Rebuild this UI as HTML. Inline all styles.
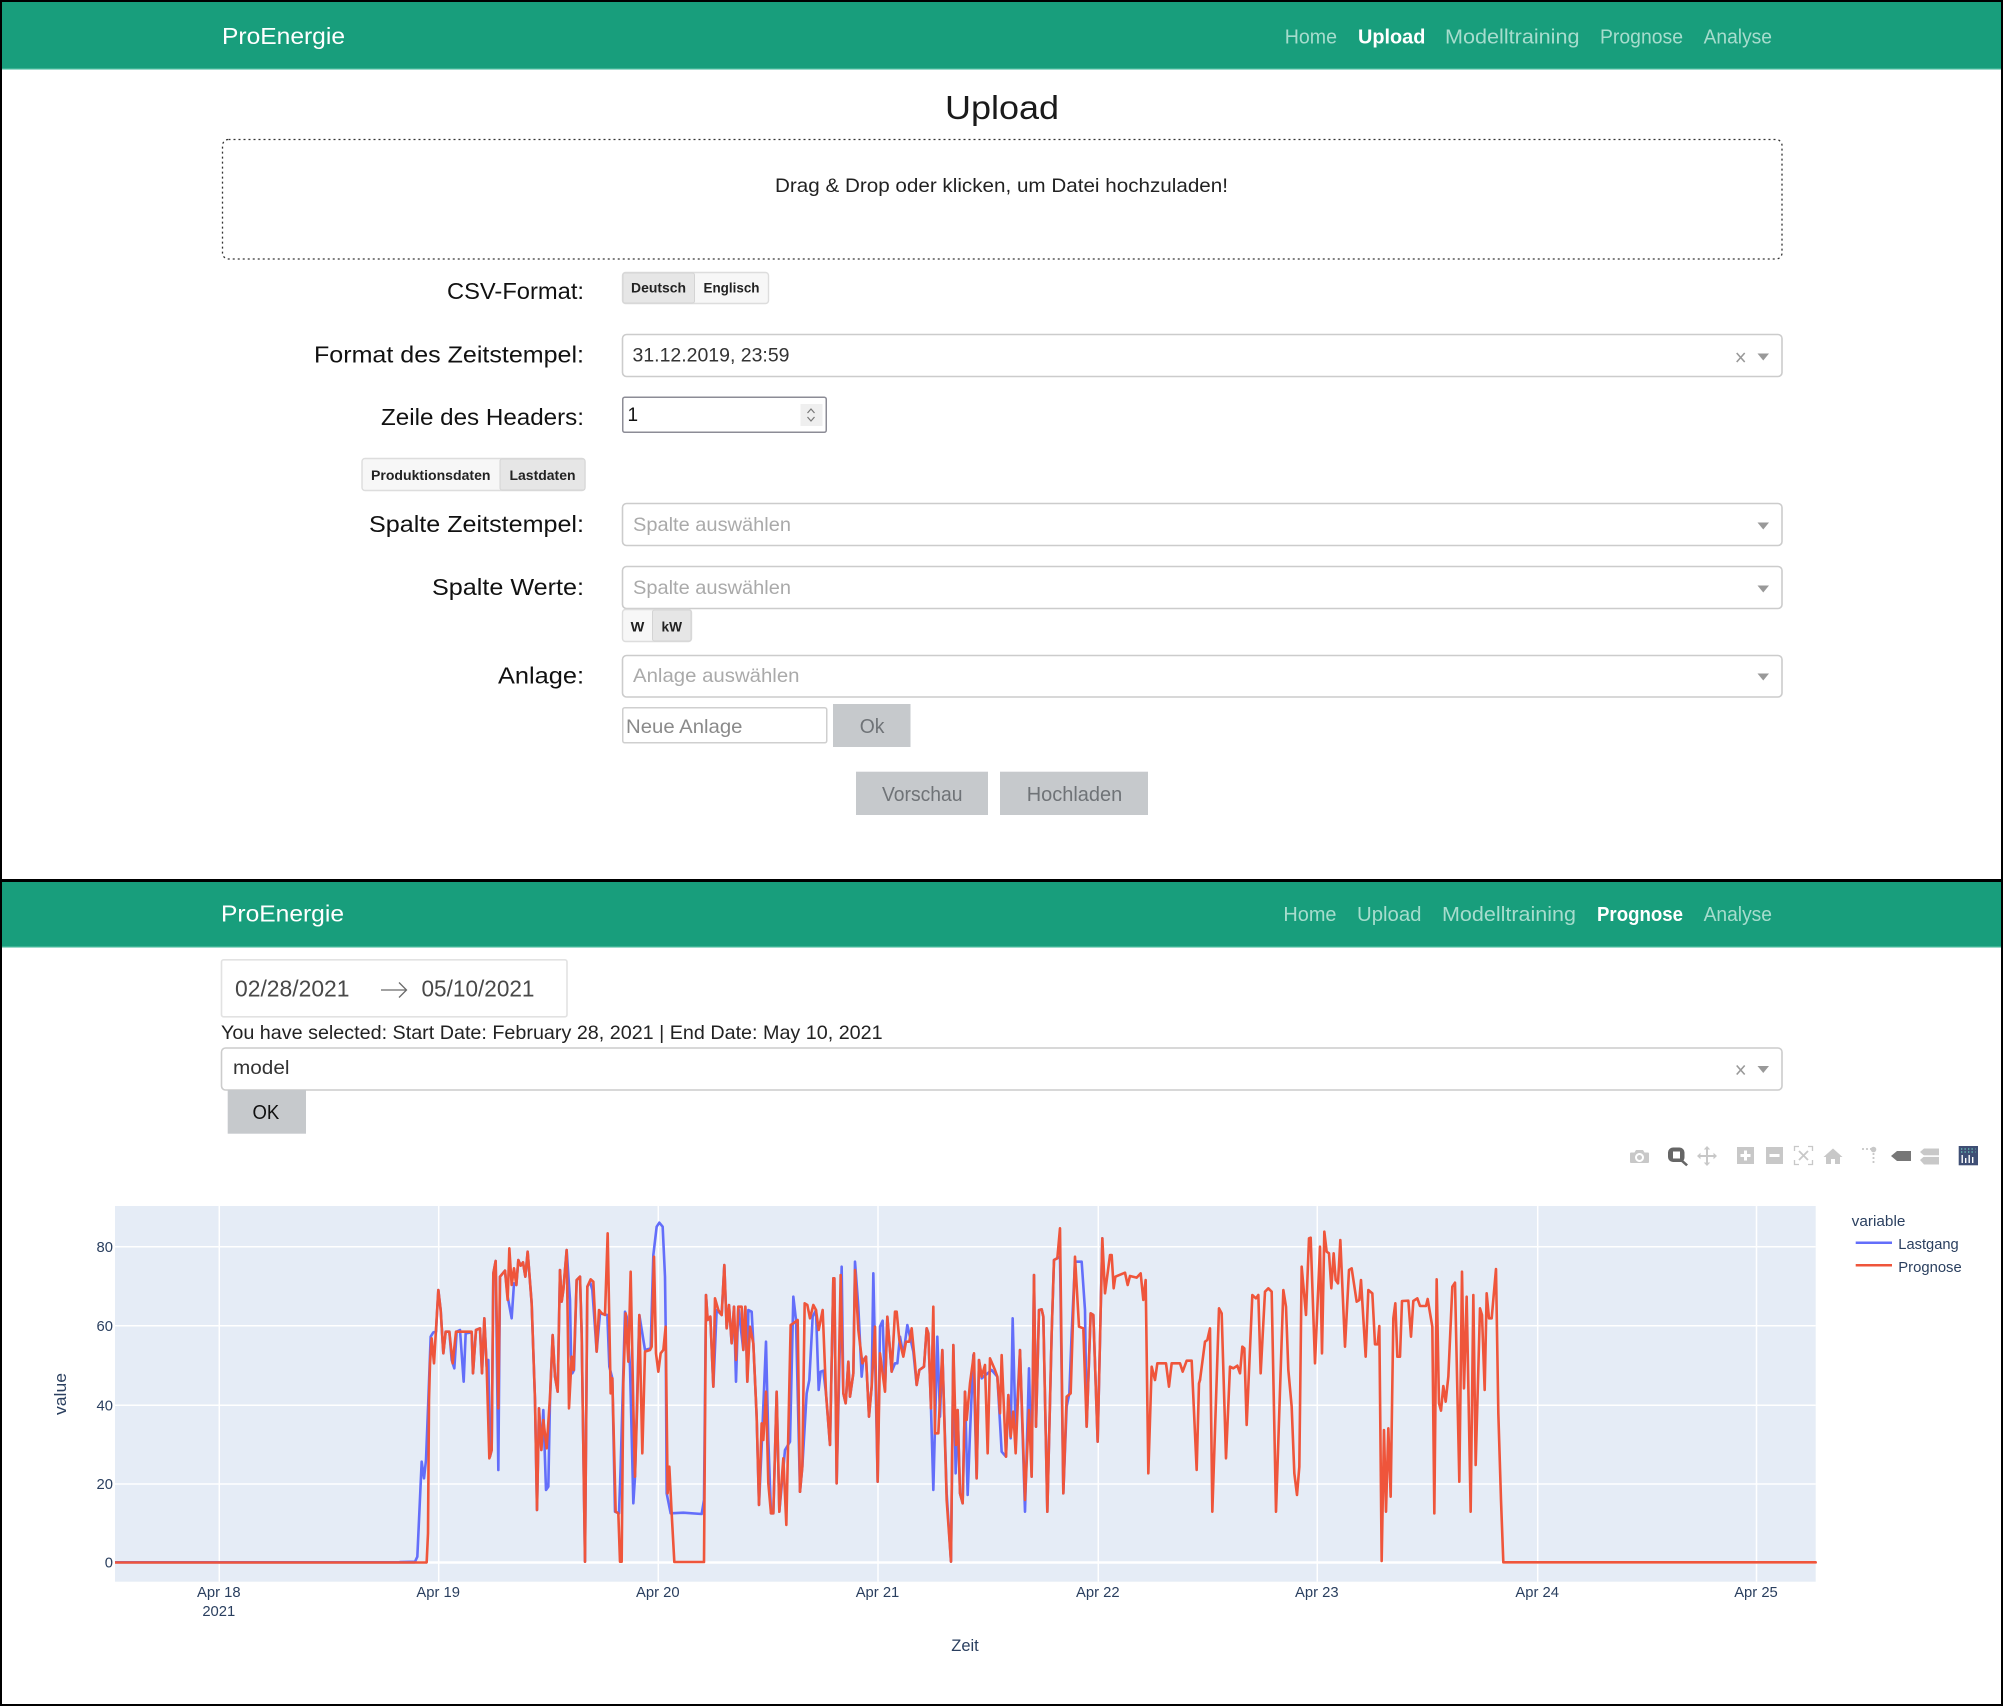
<!DOCTYPE html>
<html lang="de"><head><meta charset="utf-8"><title>ProEnergie</title>
<style>
html,body{margin:0;padding:0;background:#fff;width:2003px;height:1706px;overflow:hidden}
svg{display:block;filter:blur(.35px)}
text{font-family:"Liberation Sans",Arial,sans-serif}
.nav{font-size:20px;fill:#a6dccd}
.act{font-size:20px;fill:#fff;font-weight:bold}
.lab{font-size:23.5px;fill:#111}
.val{font-size:19.5px;fill:#333}
.ph{font-size:19.5px;fill:#aaa}
.seg{font-size:13.5px;fill:#222;font-weight:bold}
.btn{font-size:20px;fill:#6f7377}
.tk{font-size:14.8px;fill:#2a3f5f}
.sel{fill:#fff;stroke:#ccc;stroke-width:1.6}
.g{stroke:#fff;stroke-width:1.5;fill:none}
.red{fill:none;stroke:#ef553b;stroke-width:7.8;stroke-linejoin:round;stroke-linecap:round}
.blue{fill:none;stroke:#636efa;stroke-width:7.8;stroke-linejoin:round;stroke-linecap:round}
.ic{fill:#c8c8c8}
</style></head><body>
<svg xmlns="http://www.w3.org/2000/svg" width="2003" height="1706" viewBox="0 0 2003 1706">
<rect width="2003" height="1706" fill="#fff"/>

<!-- Upload panel nav -->
<rect x="0" y="0" width="2003" height="69" fill="#189e7c"/>
<rect x="0" y="68" width="2003" height="1.5" fill="#3bb394"/>
<text x="222" y="44" font-size="23" fill="#fff" textLength="123" lengthAdjust="spacingAndGlyphs">ProEnergie</text>
<text class="nav" x="1284.700" y="43.5" textLength="52.300" lengthAdjust="spacingAndGlyphs">Home</text>
<text class="act" x="1358" y="43.5" textLength="67.400" lengthAdjust="spacingAndGlyphs">Upload</text>
<text class="nav" x="1445" y="43.5" textLength="134.500" lengthAdjust="spacingAndGlyphs">Modelltraining</text>
<text class="nav" x="1600" y="43.5" textLength="83" lengthAdjust="spacingAndGlyphs">Prognose</text>
<text class="nav" x="1703.600" y="43.5" textLength="68.400" lengthAdjust="spacingAndGlyphs">Analyse</text>

<text x="945" y="119" font-size="33" fill="#1a1a1a" textLength="114" lengthAdjust="spacingAndGlyphs">Upload</text>

<rect x="222.5" y="139.5" width="1559.500" height="119.5" rx="6" fill="none" stroke="#333" stroke-width="1.3" stroke-dasharray="2 3"/>
<text x="775" y="192" font-size="19.5" fill="#222" textLength="453" lengthAdjust="spacingAndGlyphs">Drag &amp; Drop oder klicken, um Datei hochzuladen!</text>

<!-- CSV -->
<text class="lab" x="447" y="299" textLength="137" lengthAdjust="spacingAndGlyphs">CSV-Format:</text>
<rect x="622.5" y="272.5" width="146" height="31" rx="3" fill="#f7f7f7" stroke="#ddd" stroke-width="1.4"/>
<rect x="623" y="273" width="71.5" height="30" rx="2" fill="#e6e6e6" stroke="#d4d4d4"/>
<text class="seg" x="631" y="292.500" textLength="55" lengthAdjust="spacingAndGlyphs">Deutsch</text>
<text class="seg" x="703.5" y="292.500" textLength="56" lengthAdjust="spacingAndGlyphs">Englisch</text>

<!-- Format -->
<text class="lab" x="314" y="362.500" textLength="270" lengthAdjust="spacingAndGlyphs">Format des Zeitstempel:</text>
<rect class="sel" x="622.5" y="334.5" width="1159.500" height="42" rx="4"/>
<text class="val" x="632.5" y="361.500" textLength="157" lengthAdjust="spacingAndGlyphs">31.12.2019, 23:59</text>
<path d="M1736.700 353l8 9M1744.700 353l-8 9" stroke="#999" stroke-width="1.6" fill="none"/>
<path d="M1757.500 353.500h11.500l-5.750 7z" fill="#999"/>

<!-- Header line -->
<text class="lab" x="381" y="425" textLength="203" lengthAdjust="spacingAndGlyphs">Zeile des Headers:</text>
<rect x="622.75" y="397.25" width="203.500" height="35" rx="2" fill="#fff" stroke="#8c8c96" stroke-width="1.5"/>
<text x="627.500" y="421" font-size="19" fill="#111">1</text>
<rect x="800.500" y="404" width="22" height="22" fill="#efefef"/>
<path d="M807.500 413l3.500-4 3.500 4M807.500 417l3.500 4 3.500-4" fill="none" stroke="#777" stroke-width="1.200"/>

<!-- Produktions -->
<rect x="362" y="458.500" width="223" height="32" rx="3" fill="#f7f7f7" stroke="#ddd" stroke-width="1.4"/>
<rect x="500" y="459" width="85" height="31" rx="2" fill="#e6e6e6" stroke="#d4d4d4"/>
<text class="seg" x="371" y="480" textLength="119.500" lengthAdjust="spacingAndGlyphs">Produktionsdaten</text>
<text class="seg" x="509.500" y="480" textLength="66" lengthAdjust="spacingAndGlyphs">Lastdaten</text>

<!-- Spalte Zeitstempel -->
<text class="lab" x="369" y="532" textLength="215" lengthAdjust="spacingAndGlyphs">Spalte Zeitstempel:</text>
<rect class="sel" x="622.500" y="503.500" width="1159.500" height="42" rx="4"/>
<text class="ph" x="633" y="531" textLength="158" lengthAdjust="spacingAndGlyphs">Spalte auswählen</text>
<path d="M1757.500 522.500h11.500l-5.750 7z" fill="#999"/>

<!-- Spalte Werte -->
<text class="lab" x="432" y="595" textLength="152" lengthAdjust="spacingAndGlyphs">Spalte Werte:</text>
<rect class="sel" x="622.500" y="566.500" width="1159.500" height="42" rx="4"/>
<text class="ph" x="633" y="594" textLength="158" lengthAdjust="spacingAndGlyphs">Spalte auswählen</text>
<path d="M1757.500 585.500h11.500l-5.750 7z" fill="#999"/>
<rect x="622.500" y="609.500" width="69" height="32" rx="3" fill="#f7f7f7" stroke="#ddd" stroke-width="1.400"/>
<rect x="652.500" y="610" width="38.500" height="31" rx="2" fill="#e6e6e6" stroke="#d4d4d4"/>
<text class="seg" x="630.700" y="631.500" textLength="13.700" lengthAdjust="spacingAndGlyphs">W</text>
<text class="seg" x="661.500" y="631.500" textLength="20.500" lengthAdjust="spacingAndGlyphs">kW</text>

<!-- Anlage -->
<text class="lab" x="498" y="683.500" textLength="86" lengthAdjust="spacingAndGlyphs">Anlage:</text>
<rect class="sel" x="622.500" y="655.500" width="1159.500" height="41.500" rx="4"/>
<text class="ph" x="633" y="682" textLength="166.500" lengthAdjust="spacingAndGlyphs">Anlage auswählen</text>
<path d="M1757.500 673.500h11.500l-5.750 7z" fill="#999"/>
<rect x="622.750" y="707.750" width="204" height="35" rx="2" fill="#fff" stroke="#cfcfcf" stroke-width="1.500"/>
<text x="626" y="733" font-size="19.500" fill="#8a8a8a" textLength="116.500" lengthAdjust="spacingAndGlyphs">Neue Anlage</text>
<rect x="833" y="704" width="77.500" height="43" fill="#c6c9cc"/>
<text class="btn" x="859.700" y="733" textLength="24.700" lengthAdjust="spacingAndGlyphs">Ok</text>
<rect x="856" y="771.700" width="132" height="43.300" fill="#c6c9cc"/>
<text class="btn" x="882" y="801" textLength="80.500" lengthAdjust="spacingAndGlyphs">Vorschau</text>
<rect x="1000" y="771.700" width="148" height="43.300" fill="#c6c9cc"/>
<text class="btn" x="1026.700" y="801" textLength="95.500" lengthAdjust="spacingAndGlyphs">Hochladen</text>

<!-- Prognose panel nav -->
<rect x="0" y="882" width="2003" height="65" fill="#189e7c"/>
<rect x="0" y="946" width="2003" height="1.500" fill="#3bb394"/>
<text x="221" y="921.500" font-size="23" fill="#fff" textLength="123" lengthAdjust="spacingAndGlyphs">ProEnergie</text>
<text class="nav" x="1283.400" y="921" textLength="53.100" lengthAdjust="spacingAndGlyphs">Home</text>
<text class="nav" x="1357" y="921" textLength="64.500" lengthAdjust="spacingAndGlyphs">Upload</text>
<text class="nav" x="1442" y="921" textLength="134" lengthAdjust="spacingAndGlyphs">Modelltraining</text>
<text class="act" x="1597" y="921" textLength="86" lengthAdjust="spacingAndGlyphs">Prognose</text>
<text class="nav" x="1703.600" y="921" textLength="68.400" lengthAdjust="spacingAndGlyphs">Analyse</text>

<!-- Date range -->
<rect x="221.500" y="959.800" width="345.500" height="57" rx="2" fill="#fff" stroke="#e2e2e2" stroke-width="1.600"/>
<text x="235" y="996.500" font-size="23.500" fill="#484848" textLength="114.500" lengthAdjust="spacingAndGlyphs">02/28/2021</text>
<path d="M381 990h25.500M399 982.500l7.500 7.500-7.500 7.500" fill="none" stroke="#6a6a6a" stroke-width="1.300"/>
<text x="421.500" y="996.500" font-size="23.500" fill="#484848" textLength="113" lengthAdjust="spacingAndGlyphs">05/10/2021</text>
<text x="221" y="1039" font-size="19.500" fill="#222" textLength="661.600" lengthAdjust="spacingAndGlyphs">You have selected: Start Date: February 28, 2021 | End Date: May 10, 2021</text>
<rect class="sel" x="221.500" y="1048" width="1560.500" height="42" rx="4"/>
<text class="val" x="233" y="1074" textLength="56.500" lengthAdjust="spacingAndGlyphs">model</text>
<path d="M1736.700 1065.500l8 9M1744.700 1065.500l-8 9" stroke="#999" stroke-width="1.600" fill="none"/>
<path d="M1757.500 1066h11.500l-5.750 7z" fill="#999"/>
<rect x="227.700" y="1090" width="78.300" height="43.700" fill="#c6c9cc"/>
<text x="252.500" y="1119" font-size="20" fill="#111" textLength="26.800" lengthAdjust="spacingAndGlyphs">OK</text>

<!-- Modebar -->
<path class="ic" fill-rule="evenodd" d="M1631 1152.500h3.500l1.500-2.500h7l1.500 2.500h3.500a1 1 0 0 1 1 1v8.500a1 1 0 0 1-1 1h-17a1 1 0 0 1-1-1v-8.500a1 1 0 0 1 1-1zM1639.500 1153a4.500 4.500 0 1 0 .01 0zM1639.500 1155a2.500 2.500 0 1 1-.01 0z"/>
<path fill="#666" fill-rule="evenodd" d="M1673 1147.500h6.500a5 5 0 0 1 5 5v5a5 5 0 0 1-1 3l4.500 4-1.800 1.800-4.800-4.300h-8.400a5 5 0 0 1-5-5v-4.500a5 5 0 0 1 5-5zM1673 1151.500v7h7v-7z"/>
<path class="ic" d="M1707 1146l3.200 3.500h-2.200v5.500h5.500v-2.200l3.500 3.200-3.500 3.200v-2.200h-5.500v5.500h2.200l-3.200 3.500-3.200-3.500h2.200v-5.500h-5.500v2.200l-3.500-3.200 3.500-3.200v2.200h5.500v-5.500h-2.200z"/>
<path class="ic" fill-rule="evenodd" d="M1737 1147h17v17h-17zM1744 1150.500v3.500h-3.500v3h3.500v3.500h3v-3.500h3.500v-3h-3.500v-3.500z"/>
<path class="ic" fill-rule="evenodd" d="M1766 1147h17v17h-17zM1769.500 1154v3h10v-3z"/>
<path fill="none" stroke="#c8c8c8" stroke-width="1.300" d="M1794.500 1151v-4.500h4.500M1808 1146.500h4.500v4.500M1812.500 1160v4.500h-4.500M1799 1164.500h-4.500v-4.500"/>
<path fill="none" stroke="#c8c8c8" stroke-width="1.800" d="M1799 1151l9 9M1808 1151l-9 9"/>
<path class="ic" d="M1833 1148.500l9.500 8.500h-2.500v7h-5v-5h-4v5h-5v-7h-2.500z"/>
<path fill="none" stroke="#c8c8c8" stroke-width="1.800" stroke-dasharray="2 2" d="M1862 1149h10M1873.500 1153v12"/>
<circle cx="1873.500" cy="1149.500" r="2.800" fill="#c8c8c8"/>
<path fill="#777" d="M1891 1156l6-5h14v10h-14z"/>
<path class="ic" d="M1920 1152l4-3.500h15v7h-15zM1920 1160l4-3.500h15v8h-15z"/>
<rect x="1920" y="1155.300" width="19" height="1.600" fill="#fff"/>
<rect x="1958.700" y="1146" width="19.300" height="19.300" fill="#3f4f75"/>
<path fill="#fff" d="M1961.500 1155h1.400v8h-1.400zM1965 1158h1.400v5H1965zM1968.500 1155h1.400v8h-1.400zM1972 1157h1.400v6H1972z"/>
<path fill="none" stroke="#6fd0c0" stroke-width="1.300" stroke-dasharray="1.300 2.200" d="M1961 1149h14.500M1961 1152h14.500"/>

<!-- Plot -->
<rect x="115" y="1206" width="1700.700" height="375.700" fill="#e5ecf6"/>
<path class="g" d="M219.300 1206v375.700M438.700 1206v375.700M658.300 1206v375.700M878 1206v375.700M1098.300 1206v375.700M1317.300 1206v375.700M1537.700 1206v375.700M1756.500 1206v375.700M115 1246.700h1700.700M115 1325.700h1700.700M115 1405.300h1700.700M115 1484h1700.700"/>
<path d="M115 1562.500h1700.700" stroke="#fff" stroke-width="2.600"/>
<path d="M115 1562.300H415" stroke="#636efa" stroke-width="2.600" fill="none"/>
<g transform="translate(400,1200) scale(.33333)">
<polyline class="blue" points="0,1086 45,1085 52,1070 65,785 72,835 78,780 85,600 92,410 100,397 108,395 115,270 122,330 130,460 137,395 148,395 155,480 163,505 170,395 180,390 191,545 197,400 215,397 219,520 228,390 240,385 246,520 253,355 260,500 265,480 270,770 275,750 280,220 287,183 295,810 300,230 315,212 323,290 335,355 342,250 349,255 355,180 362,197 369,187 376,230 383,155 395,310 405,600 411,930 417,625 424,750 430,630 438,870 445,860 450,600 458,405 465,530 473,575 480,210 485,305 490,270 500,150 510,300 513,465 517,520 522,510 530,240 540,230 545,400 555,1085 562,260 570,245 577,270 590,455 600,340 622,345 628,500 637,535 645,935 657,940 662,800 675,335 680,350 690,500 700,910 705,830 718,345 735,450 752,445 760,165 770,80 778,68 788,80 795,230 797,380 800,880 812,940 850,938 905,942 912,900 918,285 923,360 931,350 940,560 950,330 965,345 973,195 980,385 987,315 995,430 1002,320 1008,545 1015,320 1030,450 1036,320 1042,545 1045,330 1055,335 1060,430 1070,650 1077,915 1085,740 1098,425 1105,720 1113,940 1120,940 1130,575 1138,935 1155,750 1170,725 1180,290 1188,360 1200,875"/>
</g>
<g transform="translate(800,1200) scale(.33333)">
<polyline class="blue" points="0,875 7,800 20,580 28,540 38,350 48,330 56,570 62,515 70,512 78,580 90,735 100,235 103,235 110,850 125,200 130,580 137,610 145,485 150,590 160,520 165,185 175,320 185,530 190,480 198,470 207,650 215,560 220,220 233,845 240,380 248,362 255,570 262,350 275,515 285,490 292,490 300,410 310,465 322,375 340,455 350,555 358,510 372,500 380,385 385,400 393,625 400,870 412,410 420,650 427,450 440,880 453,1085 460,435 467,820 473,630 480,880 488,910 495,575 503,885 510,700 520,465 530,835 537,480 545,535 575,510 592,530 605,755 618,770 625,585 632,715 638,355 647,700 660,450 675,935 687,505 695,830 702,225 708,680 717,330 725,328 730,350 742,935 755,400 762,180 780,170 790,880 800,620 808,580 815,400 825,185 837,185 845,185 855,330 860,680 872,340 880,345 893,725 907,115"/>
</g>
<path d="M115 1562.500H427" stroke="#ef553b" stroke-width="2.600" fill="none"/>
<g transform="translate(400,1200) scale(.33333)">
<polyline class="red" points="80,1087 84,1000 87,600 90,490 95,415 102,490 115,270 122,330 130,460 137,395 148,395 158,490 168,395 215,395 219,520 228,390 240,385 246,520 253,355 260,500 268,775 275,750 280,220 287,183 295,625 300,230 315,212 323,300 328,145 335,255 342,205 349,255 355,180 362,197 369,187 376,230 383,155 395,310 405,600 411,930 417,625 424,750 430,660 440,745 450,590 458,405 465,530 473,575 480,210 485,305 490,270 500,150 507,625 515,470 521,510 530,240 540,230 545,400 555,1085 562,260 572,238 580,245 590,455 597,330 605,340 615,345 623,100 632,580 637,535 647,935 655,940 660,1085 665,1085 670,550 677,340 685,485 692,215 700,620 705,830 712,600 718,345 727,760 735,455 750,450 755,440 762,170 768,460 775,515 782,460 790,450 797,380 803,880 808,800 815,940 823,1086 912,1086 918,285 923,360 931,350 940,560 945,295 955,330 965,345 973,195 980,385 987,315 995,430 1002,320 1008,480 1015,320 1025,320 1030,450 1036,320 1042,545 1050,380 1060,430 1070,650 1077,915 1085,670 1090,720 1098,575 1105,850 1113,940 1120,940 1130,575 1138,935 1150,775 1159,975 1172,375 1180,370 1193,360 1200,875"/>
</g>
<g transform="translate(800,1200) scale(.33333)">
<polyline class="red" points="0,875 7,800 14,310 22,315 30,355 40,315 48,330 56,390 68,330 78,580 90,735 100,235 103,235 110,850 122,225 130,580 137,610 145,485 150,590 160,520 165,210 175,390 187,490 198,470 207,650 215,560 225,380 233,845 240,460 255,575 262,350 275,515 285,335 290,335 298,420 310,470 318,425 328,425 335,385 345,490 350,555 358,510 372,500 380,385 385,400 393,625 400,320 405,700 415,700 427,450 440,900 453,1085 460,435 468,735 473,630 480,880 488,910 495,575 500,660 510,550 522,460 530,835 537,480 545,530 555,495 563,760 570,475 585,510 592,530 600,640 605,465 618,770 625,585 632,710 640,635 647,760 660,450 675,900 687,630 695,830 702,225 708,680 717,330 725,328 730,350 742,935 755,400 762,180 772,175 780,85 790,880 800,590 812,580 825,170 837,380 850,385 860,680 872,340 880,345 893,725 907,115 915,280 930,165 935,165 941,265 946,230 975,218 983,255 990,228 1010,233 1022,220 1030,300 1037,240 1045,820 1055,500 1065,540 1072,490 1098,490 1107,560 1115,490 1140,490 1148,515 1160,482 1175,482 1190,810 1197,550 1200,540"/>
</g>
<g transform="translate(1200,1200) scale(.33333)">
<polyline class="red" points="0,540 15,425 22,420 30,385 37,935 57,325 65,340 78,775 90,500 100,505 112,497 120,520 127,440 133,445 140,675 157,285 162,290 168,295 175,285 182,520 195,275 205,265 215,275 228,935 250,270 258,320 265,510 275,620 283,820 291,885 298,800 305,200 318,345 327,115 332,113 345,490 360,140 366,460 373,95 380,155 387,160 394,265 401,160 407,240 414,250 421,120 435,440 447,210 455,205 470,305 478,300 483,240 497,470 505,270 517,280 525,433 533,433 538,378 545,1083 552,690 558,935 565,685 572,890 580,355 586,310 592,470 600,470 606,303 625,302 633,410 640,303 652,295 660,318 678,318 683,297 697,380 703,940 710,238 717,610 723,632 730,558 737,605 745,530 757,260 765,248 778,845 786,215 792,565 800,290 812,935 820,285 827,795 840,325 846,345 854,570 860,280 867,355 875,355 888,207 895,640 903,900 910,1087 1847,1087"/>
</g>

<!-- axes -->
<text class="tk" x="113" y="1252" text-anchor="end">80</text>
<text class="tk" x="113" y="1331" text-anchor="end">60</text>
<text class="tk" x="113" y="1410.500" text-anchor="end">40</text>
<text class="tk" x="113" y="1489" text-anchor="end">20</text>
<text class="tk" x="113" y="1567.500" text-anchor="end">0</text>
<text class="tk" x="218.800" y="1597" text-anchor="middle">Apr 18</text>
<text class="tk" x="218.800" y="1616" text-anchor="middle">2021</text>
<text class="tk" x="438.200" y="1597" text-anchor="middle">Apr 19</text>
<text class="tk" x="657.800" y="1597" text-anchor="middle">Apr 20</text>
<text class="tk" x="877.500" y="1597" text-anchor="middle">Apr 21</text>
<text class="tk" x="1097.800" y="1597" text-anchor="middle">Apr 22</text>
<text class="tk" x="1316.800" y="1597" text-anchor="middle">Apr 23</text>
<text class="tk" x="1537.200" y="1597" text-anchor="middle">Apr 24</text>
<text class="tk" x="1756" y="1597" text-anchor="middle">Apr 25</text>
<text x="965" y="1651" font-size="16.500" fill="#2a3f5f" text-anchor="middle">Zeit</text>
<text x="66" y="1394" font-size="16.500" fill="#2a3f5f" text-anchor="middle" transform="rotate(-90 66 1394)" textLength="42" lengthAdjust="spacingAndGlyphs">value</text>

<!-- legend -->
<text class="tk" x="1851.700" y="1226" textLength="53.700" lengthAdjust="spacingAndGlyphs">variable</text>
<path d="M1855.700 1242.700H1892" stroke="#636efa" stroke-width="2.500"/>
<text class="tk" x="1898.300" y="1249" textLength="60.400" lengthAdjust="spacingAndGlyphs">Lastgang</text>
<path d="M1855.700 1265.300H1892" stroke="#ef553b" stroke-width="2.500"/>
<text class="tk" x="1898.300" y="1272" textLength="63.400" lengthAdjust="spacingAndGlyphs">Prognose</text>

<!-- outer black borders -->
<rect x="0" y="879" width="2003" height="3" fill="#000"/>
<rect x="0" y="0" width="2003" height="2" fill="#000"/>
<rect x="0" y="1704" width="2003" height="2" fill="#000"/>
<rect x="0" y="0" width="2" height="1706" fill="#000"/>
<rect x="2001" y="0" width="2" height="1706" fill="#000"/>
</svg>
</body></html>
